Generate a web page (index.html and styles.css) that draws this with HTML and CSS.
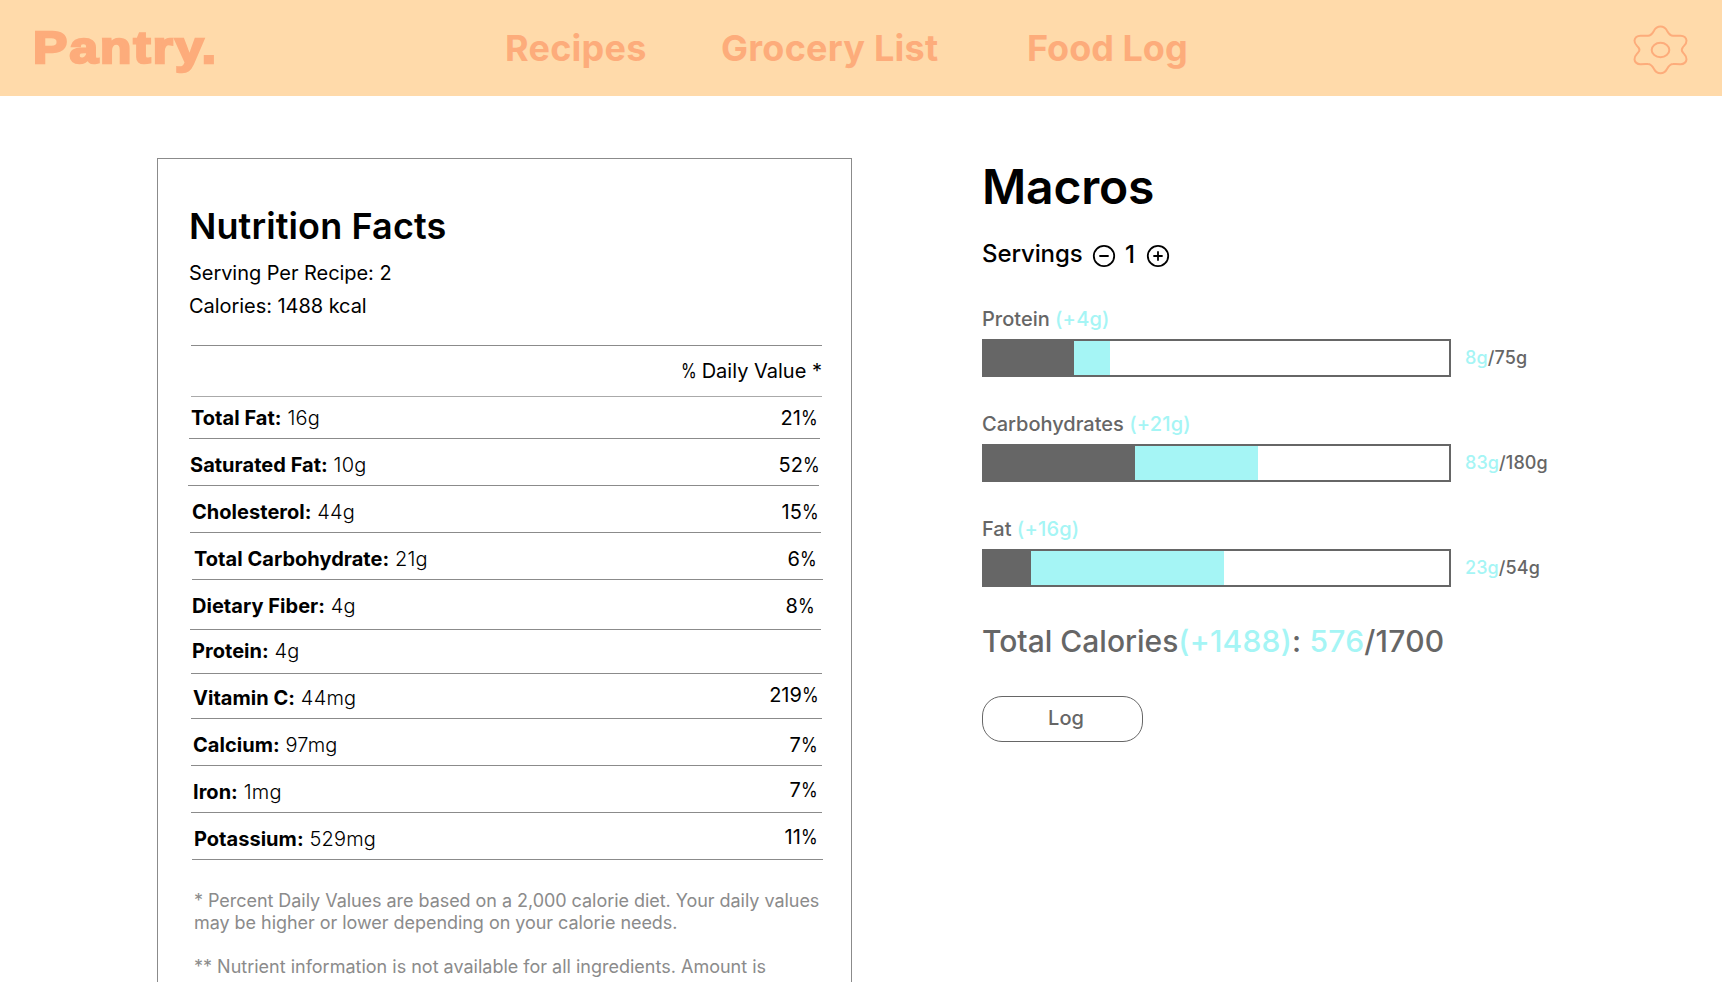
FILE: index.html
```html
<!DOCTYPE html>
<html lang="en">
<head>
<meta charset="utf-8">
<title>Pantry</title>
<link rel="stylesheet" href="styles.css">
</head>
<body>
<header class="topbar">
  <div class="logo"><span class="logo-text">Pantry.</span></div>
  <nav class="nav">
    <a class="nav-recipes">Recipes</a>
    <a class="nav-grocery">Grocery List</a>
    <a class="nav-log">Food Log</a>
  </nav>
  <svg class="gear" viewBox="96 72 171 156" fill="none" stroke="currentColor" stroke-width="6">
    <path d="M181.500 79.500C191 79.500 197 84 201 92C206 101 210 107 219 107C226 108 232 107.500 240 107C252 106 259 114 259.500 122C260 132 253 136 249 141C244 147 244 152 249 158C253 163 260 168 259.500 178C259 186 252 193.500 240 192.500C232 191.500 226 191.500 219 192C210 192 206 198 201 207C197 215 191 219.500 181.500 219.500C172 219.500 166 215 162 207C157 198 153 192 144 192C137 191.500 131 191.500 123 192.500C111 193.500 104 186 103.500 178C103 168 110 163 114 158C120 152 120 147 114 141C110 136 103 132 103.500 122C104 114 111 106 123 107C131 107.500 137 108 144 107C153 107 157 101 162 92C166 84 172 79.500 181.500 79.500Z"/>
    <ellipse cx="181.500" cy="150" rx="26.500" ry="21.500"/>
  </svg>
</header>
<main class="page">
  <section class="facts">
    <h2 class="facts-title">Nutrition Facts</h2>
    <p class="facts-meta">Serving Per Recipe: 2</p>
    <p class="facts-meta">Calories: 1488 kcal</p>
    <div class="head"><span class="pct">%</span> Daily Value *</div>
    <div class="row fat"><span><b>Total Fat:</b> 16g</span><em>21<span class="pct">%</span></em></div>
    <div class="row sat"><span><b>Saturated Fat:</b> 10g</span><em>52<span class="pct">%</span></em></div>
    <div class="row chol"><span><b>Cholesterol:</b> 44g</span><em>15<span class="pct">%</span></em></div>
    <div class="row carb"><span><b>Total Carbohydrate:</b> 21g</span><em>6<span class="pct">%</span></em></div>
    <div class="row fiber"><span><b>Dietary Fiber:</b> 4g</span><em>8<span class="pct">%</span></em></div>
    <div class="row protein"><span><b>Protein:</b> 4g</span></div>
    <div class="row vitc"><span><b>Vitamin C:</b> 44mg</span><em>219<span class="pct">%</span></em></div>
    <div class="row calcium"><span><b>Calcium:</b> 97mg</span><em>7<span class="pct">%</span></em></div>
    <div class="row iron"><span><b>Iron:</b> 1mg</span><em>7<span class="pct">%</span></em></div>
    <div class="row potassium"><span><b>Potassium:</b> 529mg</span><em>11<span class="pct">%</span></em></div>
    <p class="note first">* Percent Daily Values are based on a 2,000 calorie diet. Your daily values<br>may be higher or lower depending on your calorie needs.</p>
    <p class="note">** Nutrient information is not available for all ingredients. Amount is</p>
  </section>
  <section class="macros">
    <h1 class="macros-title">Macros</h1>
    <div class="servings">
      <span class="servings-label">Servings</span>
      <svg class="step" viewBox="0 0 24 24"><circle cx="12" cy="12" r="10.200"/><path d="M8 12h8"/></svg>
      <span class="count">1</span>
      <svg class="step" viewBox="0 0 24 24"><circle cx="12" cy="12" r="10.200"/><path d="M8 12h8M12 8v8"/></svg>
    </div>
    <div class="macro">
      <div class="macro-label">Protein <i>(+4g)</i></div>
      <div class="macro-line">
        <div class="bar"><div class="used" style="width:90px"></div><div class="added" style="width:36px"></div></div>
        <div class="value"><i>8g</i>/75g</div>
      </div>
    </div>
    <div class="macro">
      <div class="macro-label">Carbohydrates <i>(+21g)</i></div>
      <div class="macro-line">
        <div class="bar"><div class="used" style="width:151px"></div><div class="added" style="width:123px"></div></div>
        <div class="value"><i>83g</i>/180g</div>
      </div>
    </div>
    <div class="macro">
      <div class="macro-label">Fat <i>(+16g)</i></div>
      <div class="macro-line">
        <div class="bar"><div class="used" style="width:47px"></div><div class="added" style="width:193px"></div></div>
        <div class="value"><i>23g</i>/54g</div>
      </div>
    </div>
    <p class="total">Total Calories<span class="total-figures"><i>(+1488)</i>: <i>576</i>/1700</span></p>
    <button class="log">Log</button>
  </section>
</main>
</body>
</html>
```
FILE: styles.css
```css
* { box-sizing: border-box; }
html, body { height: 982px; overflow: hidden; }
body {
  margin: 0;
  background: #fff;
  color: #000;
  font-family: Inter, "Liberation Sans", sans-serif;
}
h1, h2, p { margin: 0; }
i, em { font-style: normal; }

.topbar {
  display: flex;
  height: 96px;
  padding-left: 33px;
  background: #ffdaaa;
  color: #fdac7b;
}
.logo {
  width: 472px;
  padding-top: 20px;
  font-family: "Liberation Sans", sans-serif;
  font-size: 45px;
  line-height: 56px;
  font-weight: 700;
  letter-spacing: 1.9px;
  -webkit-text-stroke: 2.5px currentColor;
}
.logo-text { display: inline-block; transform: scaleX(1.14); transform-origin: left; }
.nav {
  display: grid;
  grid-template-columns: 216px 306px 1fr;
  width: 1127px;
  padding-top: 26px;
  font-size: 36px;
  line-height: 44px;
  font-weight: 700;
  letter-spacing: 0.25px;
}
.nav-log { letter-spacing: 0; }
.gear { width: 57px; height: 52px; margin-top: 24px; }

.page { display: flex; padding: 62px 0 0 157px; height: 886px; overflow: hidden; }

.facts {
  width: 695px;
  height: 824px;
  flex: none;
  padding: 45px 28px 0 31px;
  border: 1px solid #8b8b8b;
  border-bottom: 0;
}
.facts-title { margin-bottom: 13px; font-size: 36px; line-height: 44px; font-weight: 600; letter-spacing: 0.12px; }
.facts-meta { margin-bottom: 9px; font-size: 20px; line-height: 24px; letter-spacing: -0.05px; }
.head {
  width: 631px;
  height: 52px;
  margin: 27px 0 0 2px;
  padding-top: 13px;
  border-top: 1px solid #8b8b8b;
  border-bottom: 1px solid #aaa;
  font-size: 20px;
  line-height: 24px;
  text-align: right;
}
.pct {
  display: inline-block;
  margin-left: -2.5px;
  transform: scaleX(0.85);
  transform-origin: right;
}
.head .pct { margin: 0 -0.5px 0 0; transform: scaleX(0.8); }
.row {
  display: flex;
  justify-content: space-between;
  align-items: flex-end;
  width: 631px;
  height: 47px;
  margin-left: 2px;
  padding: 0 4px 8px 2px;
  border-bottom: 1px solid #8b8b8b;
  font-size: 20px;
  line-height: 24px;
  font-weight: 300;
  letter-spacing: 0.2px;
}
.row b { font-weight: 700; letter-spacing: 0.03px; }
.row em { font-weight: 400; letter-spacing: 0; }
.fat { height: 42px; margin-left: 0; padding-right: 2px; }
.sat { margin-left: -1px; padding-right: 0; }
.sat em { margin-right: -1px; }
.chol { margin-left: 1px; padding-right: 2px; }
.carb { margin-left: 3px; padding-right: 6px; }
.fiber { height: 50px; margin-left: 1px; padding-bottom: 11px; padding-right: 6px; }
.protein { height: 44px; padding-bottom: 10px; padding-left: 1px; }
.vitc { height: 45px; padding-right: 3px; }
.vitc em { margin-bottom: 3px; }
.iron em, .potassium em { margin-bottom: 2px; }
.potassium { margin-left: 3px; padding-right: 5px; }
.note {
  margin: 22px 0 0 5px;
  color: #8b8b8b;
  font-size: 18px;
  line-height: 22px;
  white-space: nowrap;
}
.note.first { margin-top: 30px; letter-spacing: -0.045px; }

.macros { margin-left: 130px; color: #666; }
.macros i { color: #a5f5f5; }
.macros-title { color: #000; font-size: 48px; line-height: 58px; font-weight: 600; letter-spacing: -0.2px; }
.servings {
  display: flex;
  height: 30px;
  margin: 23px 0 38px;
  color: #000;
  font-size: 24px;
  line-height: 30px;
  font-weight: 500;
}
.servings-label { width: 110px; letter-spacing: -0.1px; }
.step {
  width: 24px;
  height: 24px;
  margin-top: 5px;
  fill: none;
  stroke: #000;
  stroke-width: 1.8;
  stroke-linecap: round;
}
.count { width: 30px; padding: 1px 2px 0 0; text-align: center; }
.macro { margin-bottom: 35px; }
.macro-label { margin-bottom: 8px; font-size: 20px; line-height: 24px; font-weight: 500; }
.macro-label i { letter-spacing: 0.2px; }
.macro-line { display: flex; align-items: center; gap: 14px; height: 38px; }
.bar { display: flex; width: 469px; height: 38px; border: 2px solid #666; }
.used { background: #666; }
.added { background: #a5f5f5; }
.value { font-size: 18px; line-height: 22px; font-weight: 500; letter-spacing: 0.1px; }
.total { font-size: 30px; line-height: 38px; font-weight: 500; white-space: nowrap; }
.total-figures { letter-spacing: 0.22px; }
.log {
  display: block;
  width: 161px;
  height: 46px;
  margin-top: 36px;
  padding: 0 0 2px 7px;
  border: 1px solid #666;
  border-radius: 20px;
  background: #fff;
  color: #666;
  font: 500 20px/24px Inter, "Liberation Sans", sans-serif;
}
```
